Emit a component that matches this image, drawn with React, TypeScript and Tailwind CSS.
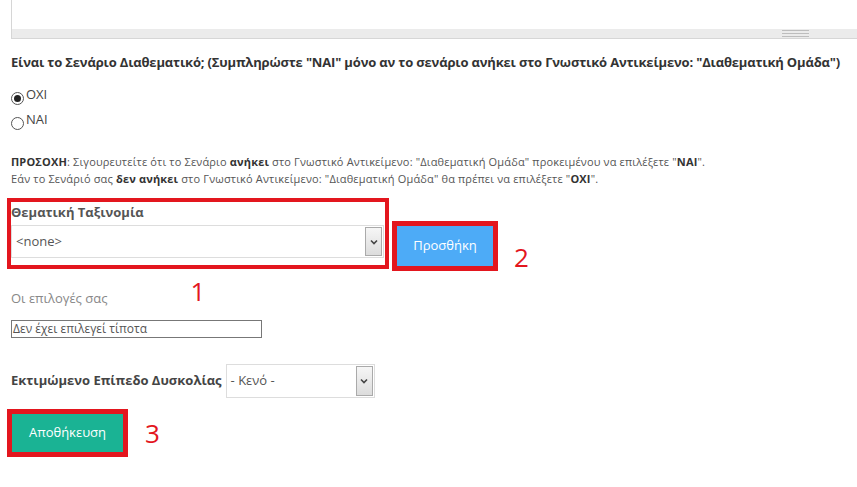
import React from 'react';

const font = { fontFamily: '"Open Sans", "Noto Sans", sans-serif' };

const Radio: React.FC<{ checked?: boolean; label: string }> = ({ checked, label }) => (
  <label className="flex items-center h-[25px] text-[13px] text-[#444]">
    <span className="w-[13px] h-[13px] rounded-full border border-[#555] bg-white flex items-center justify-center mt-[3px]">
      {checked && <span className="w-[7px] h-[7px] rounded-full bg-[#222]" />}
    </span>
    <span className="ml-[2px] -mt-[4px]">{label}</span>
  </label>
);

const SelectBox: React.FC<{ value: string; className: string }> = ({ value, className }) => (
  <div className={`flex items-stretch border border-[#ddd] bg-white ${className}`}>
    <span className="flex-1 flex items-center pl-[4px] text-[13px] text-[#555]">{value}</span>
    <span className="w-[17px] my-[1px] mr-[1px] border border-[#aaa] bg-gradient-to-b from-[#f6f6f6] to-[#dcdcdc] flex items-center justify-center">
      <svg width="8" height="6" viewBox="0 0 8 6">
        <path d="M1 1.5 L4 4.5 L7 1.5" fill="none" stroke="#444" strokeWidth="1.6" />
      </svg>
    </span>
  </div>
);

export default function App() {
  return (
    <div className="w-[857px] h-[487px] bg-white overflow-hidden" style={font}>
      {/* textarea bottom */}
      <div className="ml-[11px] h-[39px] border-l border-b border-[#d6d6d6] flex flex-col justify-end">
        <div className="h-[9px] bg-[#ebebeb] flex items-center pl-[770px]">
          <div className="flex flex-col gap-[2px]">
            <div className="w-[27px] h-px bg-[#bdbdbd]" />
            <div className="w-[27px] h-px bg-[#bdbdbd]" />
            <div className="w-[27px] h-px bg-[#bdbdbd]" />
          </div>
        </div>
      </div>

      <div className="pl-[11px]">
        <p className="mt-[13px] text-[13px] font-bold text-[#333] leading-[20px] tracking-[-0.17px] whitespace-nowrap">
          Είναι το Σενάριο Διαθεματικό; (Συμπληρώστε "ΝΑΙ" μόνο αν το σενάριο ανήκει στο Γνωστικό Αντικείμενο: "Διαθεματική Ομάδα")
        </p>

        <div className="mt-[12px]">
          <Radio checked label="OXI" />
          <Radio label="NAI" />
        </div>

        <div className="mt-[19px] text-[11px] leading-[17px] text-[#555] tracking-[0.16px] whitespace-nowrap">
          <p>
            <b className="text-[#333]">ΠΡΟΣΟΧΗ</b>: Σιγουρευτείτε ότι το Σενάριο <b className="text-[#333]">ανήκει</b> στο Γνωστικό Αντικείμενο: "Διαθεματική Ομάδα" προκειμένου να επιλέξετε "<b className="text-[#333]">ΝΑΙ</b>".
          </p>
          <p>
            Εάν το Σενάριό σας <b className="text-[#333]">δεν ανήκει</b> στο Γνωστικό Αντικείμενο: "Διαθεματική Ομάδα" θα πρέπει να επιλέξετε "<b className="text-[#333]">ΟΧΙ</b>".
          </p>
        </div>
      </div>

      {/* Θεματική Ταξινομία */}
      <div className="flex items-start pl-[7px] mt-[11px]">
        <div className="w-[382px] h-[71px] border-4 border-[#e3161e]">
          <div className="text-[13px] font-bold text-[#555] leading-[20px]">Θεματική Ταξινομία</div>
          <SelectBox value="<none>" className="mt-[3px] w-[373px] h-[33px]" />
        </div>
        <div className="ml-[3px] mt-[23px] border-[5px] border-[#e3161e]">
          <button className="w-[96px] h-[40px] bg-[#4dabf7] text-white text-[13px]">Προσθήκη</button>
        </div>
        <span className="ml-[16px] mt-[44px] text-[26px] leading-[30px] text-[#e3161e]">2</span>
      </div>

      <div className="pl-[11px] flex items-center mt-[12px] h-[30px]">
        <span className="text-[13px] text-[#888]">Οι επιλογές σας</span>
        <span className="ml-[83px] -mt-[16px] text-[26px] leading-[30px] text-[#e3161e]">1</span>
      </div>

      <div className="ml-[11px] mt-[6px] w-[251px] h-[18px] border border-[#777] flex items-center pl-[1px] text-[12px] text-[#555] leading-none">
        Δεν έχει επιλεγεί τίποτα
      </div>

      <div className="pl-[11px] mt-[26px] flex items-center">
        <span className="text-[13px] font-bold text-[#444] mr-[4px]">Εκτιμώμενο Επίπεδο Δυσκολίας</span>
        <SelectBox value="- Κενό -" className="w-[149px] h-[34px]" />
      </div>

      <div className="flex items-center pl-[7px] mt-[11px]">
        <div className="border-[5px] border-[#e3161e]">
          <button className="w-[111px] h-[38px] bg-[#1ab394] text-white text-[13px]">Αποθήκευση</button>
        </div>
        <span className="ml-[17px] text-[26px] leading-[30px] text-[#e3161e]">3</span>
      </div>
    </div>
  );
}
